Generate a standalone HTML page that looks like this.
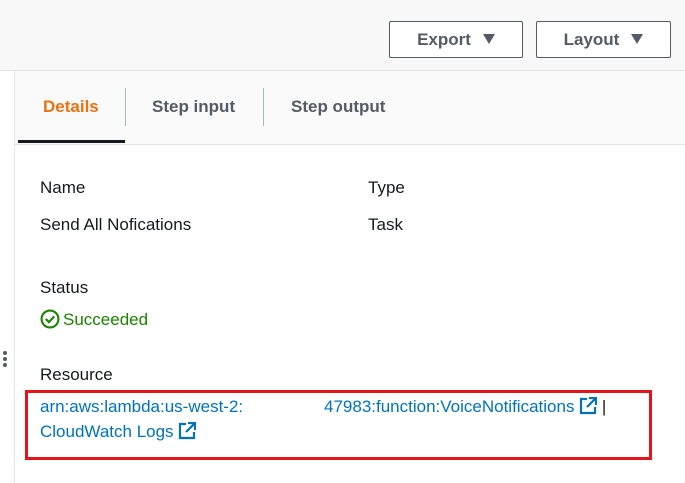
<!DOCTYPE html>
<html><head><style>
*{margin:0;padding:0;box-sizing:border-box}
body{width:685px;height:483px;overflow:hidden;background:#fff;font-family:"Liberation Sans",sans-serif;font-size:17px;color:#16191f;position:relative}
.top{position:absolute;left:0;top:0;width:685px;height:71px;background:#f8f8f8;border-bottom:1px solid #e4e4e4}
.btn{position:absolute;top:21px;height:37px;border:1px solid #545b64;border-radius:2px;background:#fff;font-weight:bold;color:#545b64;font-size:17px;line-height:35px;text-align:center}
.tri{display:inline-block;width:0;height:0;border-left:6px solid transparent;border-right:6px solid transparent;border-top:10px solid #545b64;margin-left:12px;vertical-align:1px}
.vline{position:absolute;left:14px;top:71px;width:1px;height:412px;background:#e4e4e4}
.tabs{position:absolute;left:15px;top:71px;width:670px;height:74px;background:#fafafa;border-bottom:1px solid #e4e4e4}
.tab{position:absolute;top:26px;font-weight:bold;color:#545b64;font-size:17px}
.sep{position:absolute;top:17px;width:1px;height:38px;background:#aab7b8}
.t{position:absolute;font-size:17px;white-space:nowrap}
a{color:#0073bb;text-decoration:none}
.box{position:absolute;left:25px;top:390px;width:627px;height:70px;border:3px solid #e3141c}
</style></head><body>
<div class="top">
<div class="btn" style="left:389px;width:134px">Export<span class="tri"></span></div>
<div class="btn" style="left:536px;width:135px">Layout<span class="tri"></span></div>
</div>
<div class="vline"></div>
<div class="tabs">
<div class="tab" style="left:28px;color:#ec7211">Details</div>
<div class="sep" style="left:110px"></div>
<div class="tab" style="left:137px">Step input</div>
<div class="sep" style="left:248px"></div>
<div class="tab" style="left:276px">Step output</div>
<div style="position:absolute;left:3px;top:69px;width:107px;height:3px;background:#16191f"></div>
</div>
<div class="t" style="left:40px;top:178px">Name</div>
<div class="t" style="left:368px;top:178px">Type</div>
<div class="t" style="left:40px;top:215px">Send All Nofications</div>
<div class="t" style="left:368px;top:215px">Task</div>
<div class="t" style="left:40px;top:278px">Status</div>
<div class="t" style="left:40px;top:309px;color:#1d8102"><svg width="20" height="20" viewBox="0 0 19 19" style="vertical-align:-4px;margin-right:3px"><circle cx="9.5" cy="9.5" r="8" fill="none" stroke="#1d8102" stroke-width="2"/><path d="M5.5 9.5l3 3 5-5.5" fill="none" stroke="#1d8102" stroke-width="2"/></svg>Succeeded</div>
<div style="position:absolute;left:3px;top:351px;width:5px"><div style="width:4px;height:4px;border-radius:2px;background:#545b64;margin-bottom:2px"></div><div style="width:4px;height:4px;border-radius:2px;background:#545b64;margin-bottom:2px"></div><div style="width:4px;height:4px;border-radius:2px;background:#545b64"></div></div>
<div class="t" style="left:40px;top:365px">Resource</div>
<div class="box"></div>
<div class="t" style="left:40px;top:397px"><a>arn:aws:lambda:us-west-2:</a></div>
<div class="t" style="left:324px;top:397px"><a>47983:function:VoiceNotifications <svg width="18" height="18" viewBox="0 0 18 18" style="vertical-align:-3px"><path d="M8 2H2v14h14v-6" fill="none" stroke="#0073bb" stroke-width="2.2"/><path d="M10 1h7v7M17 1L8 10" fill="none" stroke="#0073bb" stroke-width="2.2"/></svg></a> |</div>
<div class="t" style="left:40px;top:422px"><a>CloudWatch Logs <svg width="18" height="18" viewBox="0 0 18 18" style="vertical-align:-3px"><path d="M8 2H2v14h14v-6" fill="none" stroke="#0073bb" stroke-width="2.2"/><path d="M10 1h7v7M17 1L8 10" fill="none" stroke="#0073bb" stroke-width="2.2"/></svg></a></div>
</body></html>
